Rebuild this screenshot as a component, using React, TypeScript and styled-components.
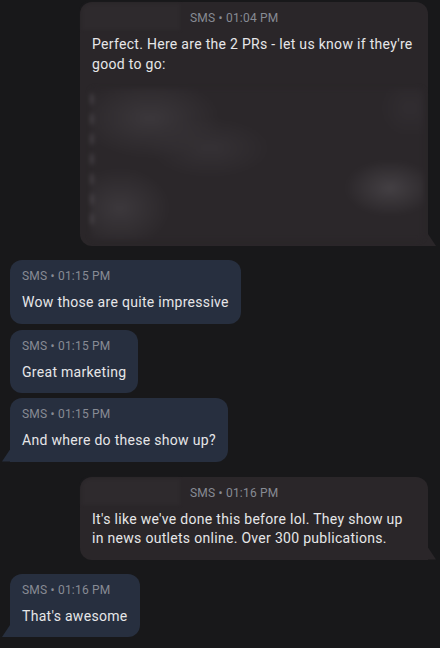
import React from "react";
import styled, { createGlobalStyle, css } from "styled-components";

const GlobalStyle = createGlobalStyle`
  html, body {
    margin: 0;
    padding: 0;
    background: #18181a;
  }
  body {
    font-family: Roboto, "Noto Sans", "Liberation Sans", sans-serif;
    -webkit-font-smoothing: antialiased;
  }
`;

const Thread = styled.div`
  width: 440px;
  height: 648px;
  overflow: hidden;
  padding-top: 2px;
  box-sizing: border-box;
  display: flex;
  flex-direction: column;
`;

const Row = styled.div<{ $out?: boolean; $gap: number }>`
  display: flex;
  justify-content: ${(p) => (p.$out ? "flex-end" : "flex-start")};
  padding: 0 12px 0 10px;
  margin-top: ${(p) => p.$gap}px;
`;

const Bubble = styled.div<{ $out?: boolean; $tail?: boolean; $wide?: boolean }>`
  position: relative;
  box-sizing: border-box;
  width: ${(p) => (p.$wide ? "348px" : "auto")};
  padding: 8px 12px 11px 12px;
  border-radius: 12px;
  background: ${(p) => (p.$out ? "#2a2629" : "#272f3f")};
  ${(p) =>
    p.$tail &&
    (p.$out
      ? css`
          border-bottom-right-radius: 0;
          &::after {
            content: "";
            position: absolute;
            right: -8px;
            bottom: 0;
            width: 8px;
            height: 12px;
            background: #2a2629;
            clip-path: polygon(0 0, 100% 100%, 0 100%);
          }
        `
      : css`
          border-bottom-left-radius: 0;
          &::after {
            content: "";
            position: absolute;
            left: -8px;
            bottom: 0;
            width: 8px;
            height: 12px;
            background: #272f3f;
            clip-path: polygon(100% 0, 100% 100%, 0 100%);
          }
        `)}
`;

const Header = styled.div`
  display: flex;
  align-items: center;
  height: 16px;
  font-size: 12px;
  letter-spacing: 0.2px;
  color: #878b94;
  margin-bottom: 9px;
  white-space: nowrap;
`;

const BlurName = styled.span`
  display: inline-block;
  width: 98px;
  height: 26px;
  margin: -6px 10px -4px -10px;
  border-radius: 8px 0 0 0;
  background: #2e2a2d;
  filter: blur(1.5px);
`;

const Body = styled.div`
  font-size: 14px;
  line-height: 19.5px;
  letter-spacing: 0.3px;
  color: #e6e6e8;
`;

/* blurred link previews: painted as soft gradients, not laid out */
const Attachment = styled.div`
  position: relative;
  height: 152px;
  margin: 14px -8px -5px -2px;
  border-radius: 6px;
  overflow: hidden;
  background:
    radial-gradient(ellipse 70px 40px at 60px 30px, #3b373b, transparent),
    radial-gradient(ellipse 60px 30px at 120px 60px, #353135, transparent),
    radial-gradient(ellipse 50px 40px at 30px 120px, #3c383c, transparent),
    radial-gradient(ellipse 45px 28px at 300px 100px, #444044, transparent),
    radial-gradient(ellipse 30px 30px at 320px 20px, #312d31, transparent),
    #2b272a;
  filter: blur(2px);

  &::before {
    content: "";
    position: absolute;
    left: 0;
    top: 6px;
    width: 3px;
    height: 140px;
    background: repeating-linear-gradient(
      to bottom,
      #4e494e 0 10px,
      transparent 10px 20px
    );
    filter: blur(1px);
  }
`;

type Msg = {
  out?: boolean;
  time: string;
  text: string;
  tail?: boolean;
  gap: number;
  attach?: boolean;
};

const messages: Msg[] = [
  {
    out: true,
    time: "01:04 PM",
    text: "Perfect. Here are the 2 PRs - let us know if they're good to go:",
    tail: true,
    gap: 0,
    attach: true,
  },
  { time: "01:15 PM", text: "Wow those are quite impressive", gap: 14 },
  { time: "01:15 PM", text: "Great marketing", gap: 6 },
  { time: "01:15 PM", text: "And where do these show up?", tail: true, gap: 5 },
  {
    out: true,
    time: "01:16 PM",
    text: "It's like we've done this before lol. They show up in news outlets online. Over 300 publications.",
    tail: true,
    gap: 15,
  },
  { time: "01:16 PM", text: "That's awesome", tail: true, gap: 14 },
];

export default function App() {
  return (
    <>
      <GlobalStyle />
      <Thread>
        {messages.map((m, i) => (
          <Row key={i} $out={m.out} $gap={m.gap}>
            <Bubble $out={m.out} $tail={m.tail} $wide={m.out}>
              <Header>
                {m.out && <BlurName />}
                SMS • {m.time}
              </Header>
              <Body>{m.text}</Body>
              {m.attach && <Attachment />}
            </Bubble>
          </Row>
        ))}
      </Thread>
    </>
  );
}
